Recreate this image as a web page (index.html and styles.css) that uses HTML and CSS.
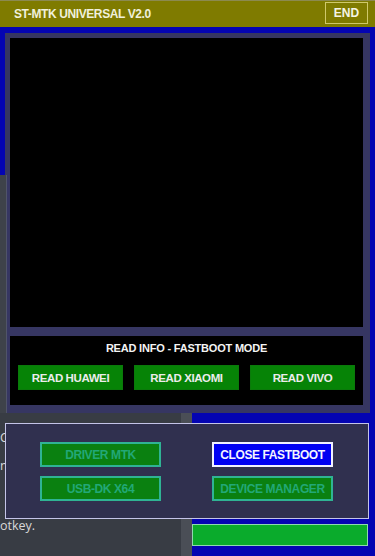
FILE: index.html
```html
<!DOCTYPE html>
<html>
<head>
<meta charset="utf-8">
<link rel="stylesheet" href="styles.css">
</head>
<body>
<header class="titlebar">
  <span class="title">ST-MTK UNIVERSAL V2.0</span>
  <span class="end">END</span>
</header>
<main class="window-body">
  <section class="panel">
    <div class="screen"></div>
    <div class="info">
      <div class="info-title">READ INFO - FASTBOOT MODE</div>
      <div class="info-buttons">
        <button class="btn-read">READ HUAWEI</button>
        <button class="btn-read">READ XIAOMI</button>
        <button class="btn-read">READ VIVO</button>
      </div>
    </div>
  </section>
  <div class="lower">
    <div class="bgapp">
      <p class="bg-line l1">Connect the device</p>
      <p class="bg-line l2">nothing else</p>
      <p class="bg-line l3">otkey.</p>
    </div>
    <div class="status-area">
      <div class="progress"></div>
    </div>
  </div>
  <div class="edge-strip"></div>
</main>
<div class="dialog">
  <button class="btn-dim">DRIVER MTK</button>
  <button class="btn-blue">CLOSE FASTBOOT</button>
  <button class="btn-dim">USB-DK X64</button>
  <button class="btn-dim">DEVICE MANAGER</button>
</div>
</body>
</html>
```
FILE: styles.css
```css
* { box-sizing: border-box; }
html, body {
  margin: 0;
  padding: 0;
}
body {
  width: 375px;
  height: 556px;
  overflow: hidden;
  background: #0404b2;
  font-family: "Liberation Sans", Arial, sans-serif;
  position: relative;
}
.titlebar {
  height: 27px;
  background: #7f7b00;
  border-top: 1px solid #8c8a50;
  display: flex;
  align-items: center;
  justify-content: space-between;
  padding: 0 7px 0 14px;
}
.title {
  color: #f0f0dc;
  font-weight: bold;
  font-size: 12px;
  letter-spacing: -0.4px;
}
.end {
  width: 43px;
  height: 22px;
  border: 1px solid #cfc96a;
  color: #f4f4e4;
  font-weight: bold;
  font-size: 12px;
  display: flex;
  align-items: center;
  justify-content: center;
  margin-top: -2px;
}
.window-body {
  position: relative;
  padding-top: 6px;
}
.panel {
  margin: 0 5px 0 5px;
  background: #363662;
  padding: 5px 7px 8px 5px;
  display: flex;
  flex-direction: column;
  gap: 9px;
}
.screen {
  height: 289px;
  background: #000;
}
.info {
  height: 69px;
  background: #000;
  padding: 4px 8px 0 8px;
  display: flex;
  flex-direction: column;
  gap: 9px;
}
.info-title {
  color: #f4f4f4;
  font-weight: bold;
  font-size: 11px;
  letter-spacing: -0.2px;
  text-align: center;
  line-height: 16px;
}
.info-buttons {
  display: grid;
  grid-template-columns: repeat(3, 105px);
  gap: 11px;
}
button {
  font-family: "Liberation Sans", Arial, sans-serif;
  font-weight: bold;
  font-size: 11.5px;
  letter-spacing: -0.4px;
  padding: 0;
  cursor: default;
}
.btn-read {
  height: 25px;
  background: #068306;
  color: #ececec;
  border: 1px solid #0a7a0a;
}
.lower {
  display: grid;
  grid-template-columns: 192px 1fr;
  height: 143px;
}
.bgapp {
  background: #383c44;
  border-right: 11px solid #4a4e56;
  position: relative;
  overflow: hidden;
  padding-top: 17px;
}
.bg-line {
  margin: 0;
  color: #d8d8d8;
  font-family: "Open Sans", sans-serif;
  font-size: 12.5px;
  line-height: 16px;
  white-space: nowrap;
}
.l2 { margin-top: 12px; }
.l3 { margin-top: 44px; }
.status-area {
  padding: 111px 7px 0 0;
}
.progress {
  height: 22px;
  background: #0aab2c;
  border: 1px solid #8fd8b0;
}
.edge-strip {
  position: absolute;
  left: 0;
  top: 148px;
  width: 7px;
  height: 238px;
  background: #3e424a;
  border-right: 1px solid #50546a;
}
.dialog {
  position: absolute;
  left: 5px;
  top: 423px;
  width: 364px;
  height: 96px;
  background: #30304f;
  border: 1px solid #c4c4e8;
  display: grid;
  grid-template-columns: 121px 121px;
  grid-template-rows: 25px 25px;
  column-gap: 51px;
  row-gap: 9px;
  padding: 18px 0 0 34px;
}
.dialog button {
  font-size: 12px;
}
.btn-dim {
  background: #0a8010;
  color: #22a877;
  border: 2px solid #2fb394;
}
.btn-blue {
  background: #0000f2;
  color: #f4f4ff;
  border: 2px solid #f0f0ff;
}
```
